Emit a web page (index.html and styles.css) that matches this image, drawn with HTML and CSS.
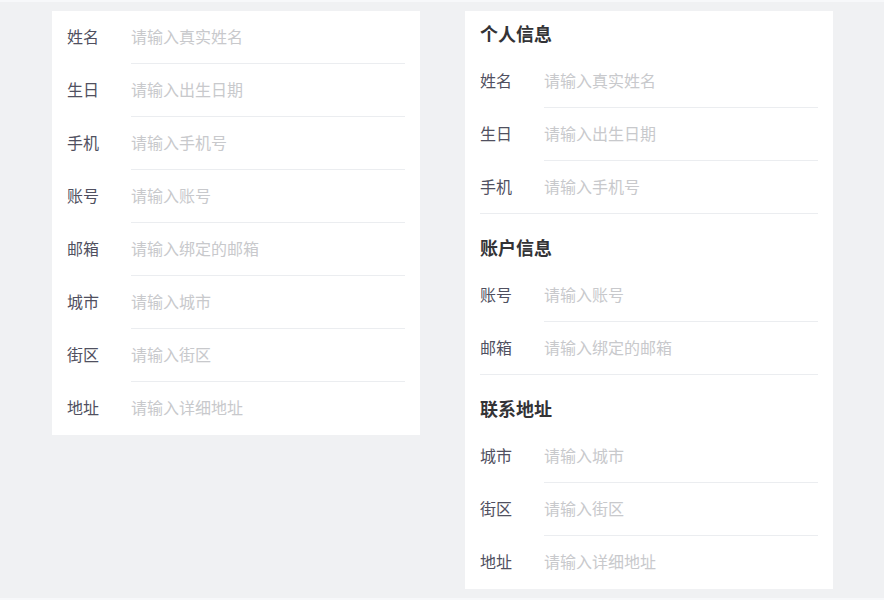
FILE: index.html
```html
<!DOCTYPE html>
<html lang="zh-CN">
<head>
<meta charset="utf-8">
<link rel="stylesheet" href="styles.css">
</head>
<body>
<div class="page">
  <div class="card">
    <div class="row"><span class="label">姓名</span><span class="ph">请输入真实姓名</span></div>
    <div class="row"><span class="label">生日</span><span class="ph">请输入出生日期</span></div>
    <div class="row"><span class="label">手机</span><span class="ph">请输入手机号</span></div>
    <div class="row"><span class="label">账号</span><span class="ph">请输入账号</span></div>
    <div class="row"><span class="label">邮箱</span><span class="ph">请输入绑定的邮箱</span></div>
    <div class="row"><span class="label">城市</span><span class="ph">请输入城市</span></div>
    <div class="row"><span class="label">街区</span><span class="ph">请输入街区</span></div>
    <div class="row last"><span class="label">地址</span><span class="ph">请输入详细地址</span></div>
  </div>
  <div class="card">
    <div class="group">
      <div class="title">个人信息</div>
      <div class="row"><span class="label">姓名</span><span class="ph">请输入真实姓名</span></div>
      <div class="row"><span class="label">生日</span><span class="ph">请输入出生日期</span></div>
      <div class="row full"><span class="label">手机</span><span class="ph">请输入手机号</span></div>
    </div>
    <div class="group">
      <div class="title">账户信息</div>
      <div class="row"><span class="label">账号</span><span class="ph">请输入账号</span></div>
      <div class="row full"><span class="label">邮箱</span><span class="ph">请输入绑定的邮箱</span></div>
    </div>
    <div class="group">
      <div class="title">联系地址</div>
      <div class="row"><span class="label">城市</span><span class="ph">请输入城市</span></div>
      <div class="row"><span class="label">街区</span><span class="ph">请输入街区</span></div>
      <div class="row last"><span class="label">地址</span><span class="ph">请输入详细地址</span></div>
    </div>
  </div>
</div>
</body>
</html>
```
FILE: styles.css
```css
html, body {
  margin: 0;
  padding: 0;
  background: #f7f8fa;
}
body {
  padding-top: 2px;
  font-family: "Noto Sans CJK SC", "Noto Sans", sans-serif;
}
.page {
  height: 596px;
  background: #f0f1f3;
  display: flex;
  align-items: flex-start;
  padding: 9px 51px 0 52px;
  gap: 45px;
  box-sizing: border-box;
}
.card {
  width: 368px;
  background: #ffffff;
  padding: 0 15px;
  box-sizing: border-box;
}
.row {
  display: flex;
  align-items: center;
  height: 53px;
  padding-bottom: 4px;
  box-sizing: border-box;
  font-size: 16px;
  line-height: 24px;
  position: relative;
}
.row::after {
  content: "";
  position: absolute;
  left: 64px;
  right: 0;
  bottom: 0;
  height: 1px;
  background: #ebedf0;
}
.row.full::after {
  left: 0;
}
.row.last::after {
  display: none;
}
.label {
  width: 64px;
  flex: none;
  color: #505060;
}
.ph {
  color: #c8c9cc;
}
.group + .group {
  margin-top: 11px;
}
.title {
  padding: 10px 0 10px;
  font-size: 18px;
  line-height: 24px;
  font-weight: 600;
  color: #333336;
}
```
